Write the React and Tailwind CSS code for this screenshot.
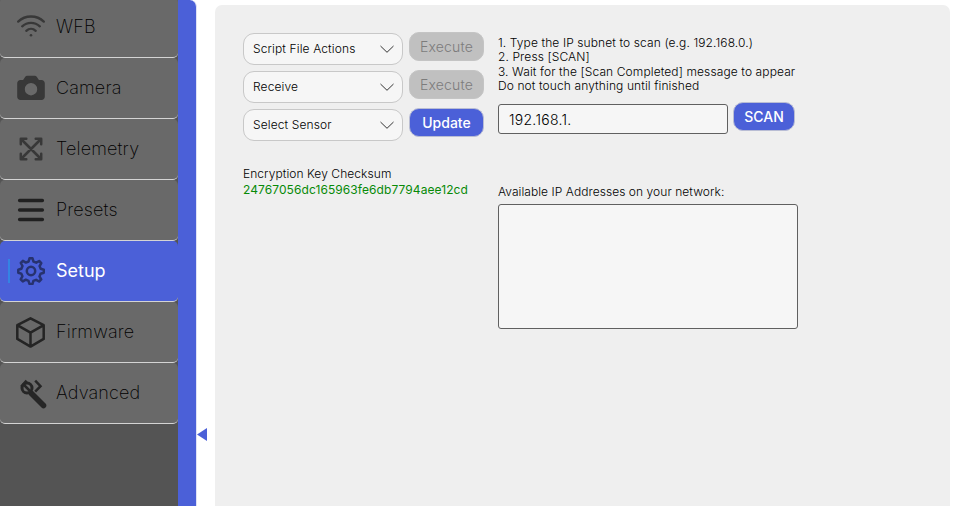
const iconBase = "h-7 w-7 shrink-0";

const WifiIcon = () => (
  <svg className={iconBase} viewBox="0 0 28 28" fill="none" stroke="#383838" strokeWidth="2.3" strokeLinecap="round">
    <path d="M1.2 8.6C8.3 1.8 19.7 1.8 26.8 8.6M5.2 13.3C10.2 8.6 17.8 8.6 22.8 13.3M9.3 17.8C12 15.3 16 15.3 18.7 17.8" />
    <circle cx="14" cy="22.3" r="1.3" fill="#383838" stroke="none" />
  </svg>
);

const CameraIcon = () => (
  <svg className={iconBase} viewBox="0 0 28 28" fill="#383838">
    <path fillRule="evenodd" d="M10.2 1.8h7.6c.9 0 1.6.4 2.1 1.100l2 3.200h2.600c1.900 0 3.300 1.400 3.300 3.300v13.300c0 1.900-1.400 3.300-3.300 3.300h-21C1.600 26 .2 24.600.2 22.700V9.400c0-1.900 1.400-3.300 3.300-3.300h2.600l2-3.200c.5-.7 1.200-1.100 2.100-1.100zM14 9a6.200 6.200 0 1 0 0 12.400A6.200 6.200 0 0 0 14 9z" />
  </svg>
);

const ExpandIcon = () => (
  <svg className={iconBase} viewBox="0 0 28 28" fill="none" stroke="#383838" strokeWidth="2.5" strokeLinecap="round" strokeLinejoin="round">
    <path d="M4 4L24 24M24 4L4 24M3.800 9.300V3.800H9.300M18.700 3.800H24.200V9.300M24.200 18.700V24.200H18.700M9.300 24.200H3.800V18.700" />
  </svg>
);

const MenuIcon = () => (
  <svg className={iconBase} viewBox="0 0 28 28" stroke="#202020" strokeWidth="3.400" strokeLinecap="round">
    <path d="M2.600 4.500H25.400M2.600 14H25.400M2.600 23.500H25.400" />
  </svg>
);

const GearIcon = () => (
  <svg className={iconBase} viewBox="0 0 28 28" fill="none" stroke="#27326f" strokeWidth="2.500" strokeLinejoin="round">
    <path d="M12.500 1.300h3l1 3.300 2.700 1.100 3-1.700 2.100 2.100-1.700 3 1.100 2.700 3.100.9v3l-3.200 1-1.100 2.700 1.700 3-2.100 2.100-3-1.700-2.700 1.100-.9 3.100h-3l-1-3.200-2.700-1.100-3 1.700-2.100-2.100 1.700-3-1.100-2.700-3-.9v-3l3.100-1 1.100-2.700-1.700-3 2.100-2.100 3 1.700 2.700-1.100z" />
    <circle cx="14" cy="14" r="4.200" />
  </svg>
);

const CubeIcon = () => (
  <svg className={iconBase} viewBox="0 0 28 28" fill="none" stroke="#242424" strokeWidth="2.500" strokeLinejoin="round" overflow="visible">
    <path d="M13.500.3L26.700 7.200V20.900L13.500 28.600.3 20.900V7.200zM.3 7.200L13.500 14.600 26.700 7.200M13.500 14.600V28.600" />
  </svg>
);

const ToolIcon = () => (
  <svg className={iconBase} viewBox="0 0 28 28" fill="none" stroke="#262626" overflow="visible">
    <path d="M14.500 14.500L26.500 26.500" strokeWidth="5.600" strokeLinecap="round" />
    <circle cx="10" cy="9" r="5" strokeWidth="3" />
    <path d="M4.300 7.500L9.600 1.600" strokeWidth="2.600" />
    <path d="M7.200 6.200L13.500 12.500" strokeWidth="2.600" />
    <path d="M18.200 1.600L23.500 7.200L18.200 12.600" strokeWidth="2.500" />
  </svg>
);

const items = [
  { label: "WFB", Icon: WifiIcon },
  { label: "Camera", Icon: CameraIcon },
  { label: "Telemetry", Icon: ExpandIcon },
  { label: "Presets", Icon: MenuIcon },
  { label: "Setup", Icon: GearIcon, active: true },
  { label: "Firmware", Icon: CubeIcon },
  { label: "Advanced", Icon: ToolIcon },
];

function NavItem({ label, Icon, active }) {
  return (
    <div
      className={
        "flex h-[61px] shrink-0 items-center rounded-[5px] border-b border-[#d4d4d4] pl-2 text-lg " +
        (active ? "bg-[#4b60d8] font-normal text-white" : "bg-[#696969] font-extralight tracking-[0.16px] text-black")
      }
    >
      <span className={"mr-[7px] h-6 w-0.5 " + (active ? "bg-[#3484e4]" : "")} />
      <Icon />
      <span className="ml-[11px]">{label}</span>
    </div>
  );
}

function Select({ label }) {
  return (
    <div className="flex h-8 w-40 items-center justify-between rounded-[11px] border border-[#c8c8c8] bg-[#f6f6f6] pr-[8px] pl-[9px] text-xs font-light tracking-[0.12px]">
      <span>{label}</span>
      <svg className="h-2 w-[14px]" viewBox="0 0 14 8" fill="none" stroke="#333" strokeWidth="1">
        <path d="M.5 1L7 7.300L13.500 1" />
      </svg>
    </div>
  );
}

function Button({ label, className }) {
  return (
    <button className={"flex h-[29px] items-center justify-center rounded-[10px] border text-sm " + className}>
      {label}
    </button>
  );
}

const disabledButton = "w-[75px] border-[#c4c4c4] bg-[#c0c0c0] font-light tracking-[0.2px] text-[#7c7c7c]";
const primaryButton = "border-[#b9bdd4] bg-[#4b60d8] font-medium text-white";

const actions = [
  { label: "Script File Actions", button: "Execute", style: disabledButton },
  { label: "Receive", button: "Execute", style: disabledButton },
  { label: "Select Sensor", button: "Update", style: "w-[75px] " + primaryButton },
];

export default function App() {
  return (
    <div className="flex h-[506px] w-[957px] overflow-hidden bg-white font-['Inter',sans-serif] text-black">
      <aside className="flex w-[197px] shrink-0 rounded-tr-[7px] border-r border-[#dfe2f5] bg-[#4b60d8]">
        <nav className="flex w-[178px] flex-col overflow-hidden bg-[#545454]">
          <div className="-mt-[3px] flex flex-col">
            {items.map((item) => (
              <NavItem key={item.label} {...item} />
            ))}
          </div>
        </nav>
      </aside>
      <div className="w-[18px] shrink-0 pt-[428px]">
        <svg className="h-[13px] w-[10px]" viewBox="0 0 10 13" fill="#4b60d8">
          <path d="M0 6.500L10 0V13z" />
        </svg>
      </div>
      <main className="mt-[5px] flex w-[735px] rounded-t-[7px] bg-[#efefef] pt-[27px] pl-7">
        <section className="w-[255px]">
          <div className="flex flex-col gap-[5px]">
            {actions.map((action) => (
              <div key={action.label} className="flex h-[33px] gap-1.5">
                <div className="pt-px">
                  <Select label={action.label} />
                </div>
                <Button label={action.button} className={action.style} />
              </div>
            ))}
          </div>
          <div className="mt-[25px] text-xs leading-4 font-light tracking-[0.07px]">
            <p>Encryption Key Checksum</p>
            <p className="font-normal tracking-[0.08px] text-[#078a07]">24767056dc165963fe6db7794aee12cd</p>
          </div>
        </section>
        <section className="w-[310px]">
          <div className="pt-[4px] text-xs leading-[14.300px] font-light tracking-[0.11px]">
            <p>1. Type the IP subnet to scan (e.g. 192.168.0.)</p>
            <p>2. Press [SCAN]</p>
            <p>3. Wait for the [Scan Completed] message to appear</p>
            <p>Do not touch anything until finished</p>
          </div>
          <div className="mt-[8.800px] flex h-[32px] gap-[5px]">
            <div className="mt-[2px] flex h-[30px] w-[230px] items-center rounded-[3px] border border-[#606060] bg-[#f6f6f6] pt-0.5 pl-2.5 text-sm font-light tracking-[0.28px]">
              192.168.1.
            </div>
            <Button label="SCAN" className={"w-[62px] pt-px " + primaryButton} />
          </div>
          <p className="mt-[50px] text-xs leading-4 font-light tracking-[0.06px]">Available IP Addresses on your network:</p>
          <div className="mt-[4px] h-[125px] w-[300px] rounded-[3px] border border-[#606060] bg-[#f6f6f6]" />
        </section>
      </main>
    </div>
  );
}
